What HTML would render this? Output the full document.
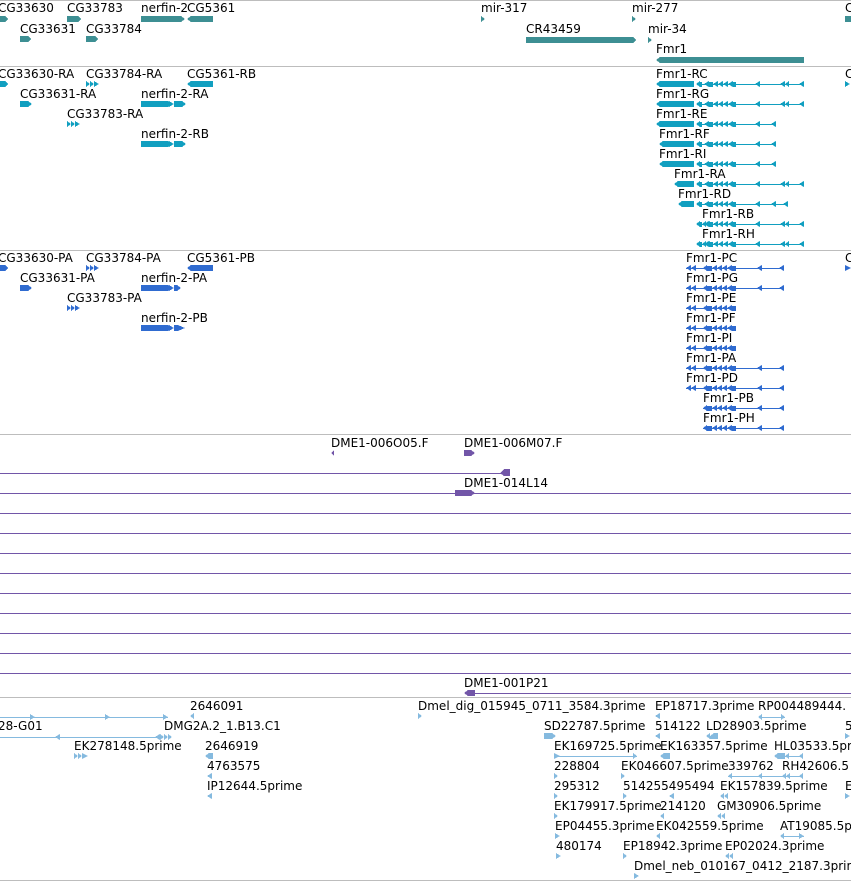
<!DOCTYPE html>
<html><head><meta charset="utf-8"><style>
html,body{margin:0;padding:0;background:#fff;width:851px;height:882px;overflow:hidden}
svg text{font-family:"DejaVu Sans","Liberation Sans",sans-serif;font-size:12px;fill:#000}
</style></head><body>
<svg width="851" height="882" xmlns="http://www.w3.org/2000/svg" shape-rendering="crispEdges">
<defs>
<g id="tlong" fill="#119fc0" stroke="none">
<rect x="700" y="0" width="104" height="1"/>
<polygon points="696,0 700,-3 700,3"/><rect x="700" y="-2" width="2" height="5"/>
<polygon points="704,0 709,-3 709,3"/><rect x="709" y="-2" width="4" height="5"/>
<polygon points="713,0 718,-3 718,3"/><polygon points="718,0 723,-3 723,3"/><polygon points="723,0 728,-3 728,3"/><polygon points="728,0 733,-3 733,3"/><rect x="733" y="-2" width="3" height="5"/>
<polygon points="755,0 760,-3 760,3"/><polygon points="780,0 785,-3 785,3"/><polygon points="785,0 789,-3 789,3"/><polygon points="799,0 804,-3 804,3"/>
</g>
<g id="tshort" fill="#119fc0">
<rect x="700" y="0" width="76" height="1"/>
<polygon points="696,0 700,-3 700,3"/><rect x="700" y="-2" width="2" height="5"/>
<polygon points="704,0 709,-3 709,3"/><rect x="709" y="-2" width="4" height="5"/>
<polygon points="713,0 718,-3 718,3"/><polygon points="718,0 723,-3 723,3"/><polygon points="723,0 728,-3 728,3"/><polygon points="728,0 733,-3 733,3"/><rect x="733" y="-2" width="3" height="5"/>
<polygon points="755,0 760,-3 760,3"/><polygon points="771,0 776,-3 776,3"/>
</g>
<g id="pchain" fill="#2f6bd0">
<polygon points="703,0 707,-3 707,3"/><rect x="707" y="-2" width="5" height="5"/>
<polygon points="712,0 717,-3 717,3"/><polygon points="717,0 722,-3 722,3"/><polygon points="722,0 727,-3 727,3"/><polygon points="727,0 732,-3 732,3"/><rect x="732" y="-2" width="4" height="5"/>
</g>
<g id="plong" fill="#2f6bd0">
<rect x="686" y="0" width="98" height="1"/>
<polygon points="686,0 691,-3 691,3"/><polygon points="691,0 696,-3 696,3"/>
<use href="#pchain"/>
<polygon points="757,0 762,-3 762,3"/><polygon points="779,0 784,-3 784,3"/>
</g>
<g id="pshort" fill="#2f6bd0">
<rect x="686" y="0" width="50" height="1"/>
<polygon points="686,0 691,-3 691,3"/><polygon points="691,0 696,-3 696,3"/>
<use href="#pchain"/>
</g>
<g id="pbh" fill="#2f6bd0">
<rect x="703" y="0" width="81" height="1"/>
<polygon points="703,0 707,-3 707,3"/>
<use href="#pchain"/>
<polygon points="757,0 762,-3 762,3"/><polygon points="779,0 784,-3 784,3"/>
</g>
</defs>

<g fill="#bdbdbd">
<rect x="0" y="0" width="851" height="1"/>
<rect x="0" y="66" width="851" height="1"/>
<rect x="0" y="250" width="851" height="1"/>
<rect x="0" y="434" width="851" height="1"/>
<rect x="0" y="697" width="851" height="1"/>
<rect x="0" y="880" width="851" height="1"/>
</g>

<g fill="#3d8f93">
<polygon points="0,16 5,16 8,19 5,22 0,22"/>
<polygon points="67,16 78,16 81,19 78,22 67,22"/>
<polygon points="141,16 181,16 185,19 181,22 141,22"/>
<polygon points="187,19 191,16 213,16 213,22 191,22"/>
<polygon points="20,36 28,36 31,39 28,42 20,42"/>
<polygon points="86,36 95,36 98,39 95,42 86,42"/>
<polygon points="481,16 485,19 481,22"/>
<polygon points="632,16 636,19 632,22"/>
<polygon points="526,37 633,37 636,40 633,43 526,43"/>
<polygon points="648,37 652,40 648,43"/>
<polygon points="656,60 660,57 804,57 804,63 660,63"/>
<rect x="845" y="16" width="6" height="6"/>
</g>
<text x="-2" y="12">CG33630</text>
<text x="67" y="12">CG33783</text>
<text x="141" y="12">nerfin-2</text><text x="187" y="12">CG5361</text>
<text x="20" y="33">CG33631</text>
<text x="86" y="33">CG33784</text>
<text x="481" y="12">mir-317</text>
<text x="632" y="12">mir-277</text>
<text x="526" y="33">CR43459</text>
<text x="648" y="33">mir-34</text>
<text x="656" y="53">Fmr1</text>
<text x="845" y="12">C</text>

<g fill="#119fc0">
<polygon points="0,81 5,81 8,84 5,87 0,87"/>
<polygon points="86,81 90,84 86,87"/><polygon points="90,81 94,84 90,87"/><polygon points="94,81 99,84 94,87"/>
<polygon points="187,84 191,81 213,81 213,87 191,87"/>
<polygon points="20,101 28,101 32,104 28,107 20,107"/>
<polygon points="141,101 168,101 171,104 168,107 141,107"/><polygon points="169,101 174,104 169,107"/><rect x="174" y="101" width="8" height="6"/><polygon points="182,101 186,104 182,107"/>
<polygon points="67,121 71,124 67,127"/><polygon points="71,121 75,124 71,127"/><polygon points="75,121 80,124 75,127"/>
<polygon points="141,141 168,141 171,144 168,147 141,147"/><polygon points="169,141 174,144 169,147"/><rect x="174" y="141" width="8" height="6"/><polygon points="182,141 186,144 182,147"/>
<polygon points="845,81 850,84 845,87"/>
</g>
<text x="-2" y="78">CG33630-RA</text>
<text x="86" y="78">CG33784-RA</text>
<text x="187" y="78">CG5361-RB</text>
<text x="20" y="98">CG33631-RA</text>
<text x="141" y="98">nerfin-2-RA</text>
<text x="67" y="118">CG33783-RA</text>
<text x="141" y="138">nerfin-2-RB</text>
<text x="845" y="78">C</text>

<g fill="#119fc0">
<polygon points="656,84 660,81 694,81 694,87 660,87"/>
<polygon points="656,104 660,101 694,101 694,107 660,107"/>
<polygon points="656,124 660,121 694,121 694,127 660,127"/>
<polygon points="659,144 663,141 694,141 694,147 663,147"/>
<polygon points="659,164 663,161 694,161 694,167 663,167"/>
<polygon points="674,184 678,181 694,181 694,187 678,187"/>
<polygon points="678,204 682,201 694,201 694,207 682,207"/>
</g>
<use href="#tlong" y="84"/>
<use href="#tlong" y="104"/>
<use href="#tshort" y="124"/>
<use href="#tshort" y="144"/>
<use href="#tshort" y="164"/>
<use href="#tlong" y="184"/>
<use href="#tshort" y="204"/>
<rect x="776" y="204" width="12" height="1" fill="#119fc0"/><polygon points="783,204 788,201 788,207" fill="#119fc0"/>
<g fill="#119fc0"><polygon points="702,224 706,221 706,227"/><polygon points="706,224 710,221 710,227"/><polygon points="702,244 706,241 706,247"/><polygon points="706,244 710,241 710,247"/></g>
<use href="#tlong" y="224"/>
<use href="#tlong" y="244"/>
<text x="656" y="78">Fmr1-RC</text>
<text x="656" y="98">Fmr1-RG</text>
<text x="656" y="118">Fmr1-RE</text>
<text x="659" y="138">Fmr1-RF</text>
<text x="659" y="158">Fmr1-RI</text>
<text x="674" y="178">Fmr1-RA</text>
<text x="678" y="198">Fmr1-RD</text>
<text x="702" y="218">Fmr1-RB</text>
<text x="702" y="238">Fmr1-RH</text>

<g fill="#2f6bd0">
<polygon points="0,265 5,265 8,268 5,271 0,271"/>
<polygon points="86,265 90,268 86,271"/><polygon points="90,265 94,268 90,271"/><polygon points="94,265 99,268 94,271"/>
<polygon points="187,268 191,265 213,265 213,271 191,271"/>
<polygon points="20,285 28,285 32,288 28,291 20,291"/>
<polygon points="141,285 168,285 171,288 168,291 141,291"/><polygon points="169,285 174,288 169,291"/><rect x="174" y="285" width="3" height="6"/><polygon points="177,285 181,288 177,291"/>
<polygon points="67,305 71,308 67,311"/><polygon points="71,305 75,308 71,311"/><polygon points="75,305 80,308 75,311"/>
<polygon points="141,325 168,325 171,328 168,331 141,331"/><polygon points="169,325 174,328 169,331"/><rect x="174" y="325" width="4" height="6"/><polygon points="178,325 185,328 178,331"/>
<polygon points="845,265 851,268 845,271"/>
</g>
<text x="-2" y="262">CG33630-PA</text>
<text x="86" y="262">CG33784-PA</text>
<text x="187" y="262">CG5361-PB</text>
<text x="20" y="282">CG33631-PA</text>
<text x="141" y="282">nerfin-2-PA</text>
<text x="67" y="302">CG33783-PA</text>
<text x="141" y="322">nerfin-2-PB</text>
<text x="845" y="262">C</text>
<use href="#plong" y="268"/>
<use href="#plong" y="288"/>
<use href="#pshort" y="308"/>
<use href="#pshort" y="328"/>
<use href="#pshort" y="348"/>
<use href="#plong" y="368"/>
<use href="#plong" y="388"/>
<use href="#pbh" y="408"/>
<use href="#pbh" y="428"/>
<text x="686" y="262">Fmr1-PC</text>
<text x="686" y="282">Fmr1-PG</text>
<text x="686" y="302">Fmr1-PE</text>
<text x="686" y="322">Fmr1-PF</text>
<text x="686" y="342">Fmr1-PI</text>
<text x="686" y="362">Fmr1-PA</text>
<text x="686" y="382">Fmr1-PD</text>
<text x="703" y="402">Fmr1-PB</text>
<text x="703" y="422">Fmr1-PH</text>

<g fill="#7256a8">
<polygon points="331,453 334,450 334,456"/>
<polygon points="464,450 471,450 475,453 471,456 464,456"/>
<rect x="0" y="473" width="505" height="1"/>
<polygon points="500,473 504,469 510,469 510,476 504,476"/>
<rect x="0" y="493" width="851" height="1"/>
<polygon points="455,490 470,490 473,493 470,496 455,496"/>
<polygon points="464,490 471,490 475,493 471,496 464,496"/>
<rect x="0" y="513" width="851" height="1"/>
<rect x="0" y="533" width="851" height="1"/>
<rect x="0" y="553" width="851" height="1"/>
<rect x="0" y="573" width="851" height="1"/>
<rect x="0" y="593" width="851" height="1"/>
<rect x="0" y="613" width="851" height="1"/>
<rect x="0" y="633" width="851" height="1"/>
<rect x="0" y="653" width="851" height="1"/>
<rect x="0" y="673" width="851" height="1"/>
<rect x="468" y="693" width="383" height="1"/>
<polygon points="464,693 468,690 475,690 475,696 468,696"/>
</g>
<text x="331" y="447">DME1-006O05.F</text>
<text x="464" y="447">DME1-006M07.F</text>
<text x="464" y="487">DME1-014L14</text>
<text x="464" y="687">DME1-001P21</text>

<g fill="#85badf">
<rect x="0" y="717" width="168" height="1"/>
<polygon points="30,714 35,717 30,720"/><polygon points="105,714 110,717 105,720"/><polygon points="163,714 168,717 163,720"/>
<rect x="0" y="737" width="160" height="1"/>
<polygon points="55,737 60,734 60,740"/><polygon points="155,737 160,734 160,740"/>
<polygon points="160,734 164,737 160,740"/><polygon points="164,734 168,737 164,740"/><polygon points="168,734 172,737 168,740"/>
<polygon points="190,716 194,713 194,719"/>
<polygon points="418,713 422,716 418,719"/>
<polygon points="655,716 660,713 660,719"/>
<rect x="760" y="717" width="25" height="1"/><polygon points="758,717 762,714 762,720"/><polygon points="781,714 785,717 781,720"/>
<polygon points="544,733 552,733 556,736 552,739 544,739"/>
<polygon points="655,736 660,733 660,739"/>
<polygon points="706,736 710,733 710,739"/><polygon points="710,736 714,733 718,733 718,739 714,739 710,739"/>
<polygon points="845,733 850,736 845,739"/>
<polygon points="74,753 78,756 74,759"/><polygon points="78,753 82,756 78,759"/><polygon points="82,753 88,756 82,759"/>
<polygon points="205,756 209,753 213,753 213,759 209,759"/>
<rect x="554" y="756" width="83" height="1"/><polygon points="554,753 560,756 554,759"/><polygon points="633,753 637,756 633,759"/>
<polygon points="660,756 664,753 670,753 670,759 664,759"/>
<rect x="778" y="756" width="25" height="1"/><polygon points="774,756 778,753 785,753 785,759 778,759"/><polygon points="785,756 789,753 789,759"/><polygon points="799,756 803,753 803,759"/>
<polygon points="207,776 212,773 212,779"/>
<polygon points="554,773 558,776 554,779"/>
<polygon points="621,773 625,776 621,779"/>
<rect x="728" y="776" width="75" height="1"/><polygon points="728,776 732,773 732,779"/><polygon points="758,776 762,773 762,779"/><polygon points="782,776 786,773 786,779"/><polygon points="786,776 790,773 790,779"/><polygon points="799,776 803,773 803,779"/>
<polygon points="207,796 212,793 212,799"/>
<polygon points="554,793 558,796 554,799"/>
<polygon points="623,793 627,796 623,799"/>
<polygon points="669,796 674,793 674,799"/>
<polygon points="720,796 724,793 724,799"/><polygon points="724,796 728,793 728,799"/>
<polygon points="845,793 850,796 845,799"/>
<polygon points="554,813 558,816 554,819"/>
<polygon points="660,816 664,813 664,819"/>
<polygon points="717,816 721,813 721,819"/><polygon points="721,816 725,813 725,819"/>
<polygon points="555,833 560,836 555,839"/>
<polygon points="656,836 660,833 660,839"/>
<rect x="782" y="836" width="22" height="1"/><polygon points="780,836 784,833 784,839"/><polygon points="799,833 804,836 799,839"/>
<polygon points="556,853 561,856 556,859"/>
<polygon points="623,853 627,856 623,859"/>
<polygon points="725,856 729,853 729,859"/><polygon points="729,856 733,853 733,859"/>
<polygon points="634,873 639,876 634,879"/>
</g>
<text x="190" y="710">2646091</text>
<text x="418" y="710">Dmel_dig_015945_0711_3584.3prime</text>
<text x="655" y="710">EP18717.3prime</text>
<text x="758" y="710">RP004489444.</text>
<text x="-2" y="730">28-G01</text>
<text x="164" y="730">DMG2A.2_1.B13.C1</text>
<text x="544" y="730">SD22787.5prime</text>
<text x="655" y="730">514122</text>
<text x="706" y="730">LD28903.5prime</text>
<text x="845" y="730">5</text>
<text x="74" y="750">EK278148.5prime</text>
<text x="205" y="750">2646919</text>
<text x="554" y="750">EK169725.5prime</text>
<text x="660" y="750">EK163357.5prime</text>
<text x="774" y="750">HL03533.5prime</text>
<text x="207" y="770">4763575</text>
<text x="554" y="770">228804</text>
<text x="621" y="770">EK046607.5prime</text>
<text x="728" y="770">339762</text>
<text x="782" y="770">RH42606.5</text>
<text x="207" y="790">IP12644.5prime</text>
<text x="554" y="790">295312</text>
<text x="623" y="790">514255495494</text>
<text x="720" y="790">EK157839.5prime</text>
<text x="845" y="790">E</text>
<text x="554" y="810">EK179917.5prime</text>
<text x="660" y="810">214120</text>
<text x="717" y="810">GM30906.5prime</text>
<text x="555" y="830">EP04455.3prime</text>
<text x="656" y="830">EK042559.5prime</text>
<text x="780" y="830">AT19085.5prime</text>
<text x="556" y="850">480174</text>
<text x="623" y="850">EP18942.3prime</text>
<text x="725" y="850">EP02024.3prime</text>
<text x="634" y="870">Dmel_neb_010167_0412_2187.3prime</text>
</svg>
</body></html>
